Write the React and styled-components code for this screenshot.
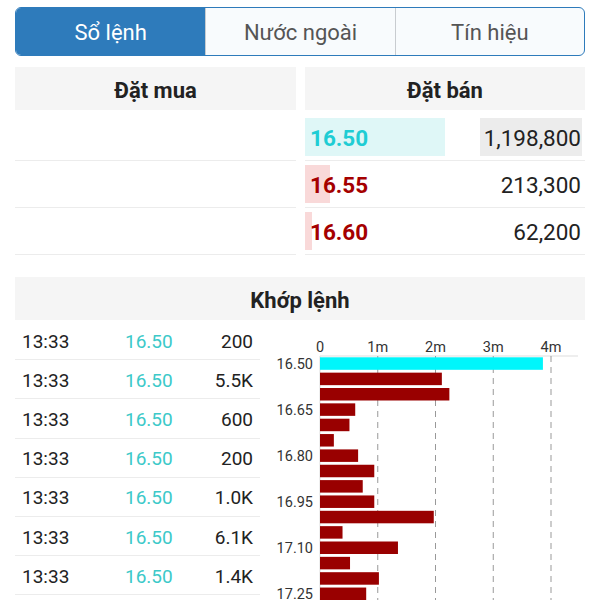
import styled, { createGlobalStyle } from "styled-components";

const asks = [
  { price: "16.50", volume: "1,198,800", bar: 140, best: true },
  { price: "16.55", volume: "213,300", bar: 25 },
  { price: "16.60", volume: "62,200", bar: 7 },
];

const trades = [
  ["13:33", "16.50", "200"],
  ["13:33", "16.50", "5.5K"],
  ["13:33", "16.50", "600"],
  ["13:33", "16.50", "200"],
  ["13:33", "16.50", "1.0K"],
  ["13:33", "16.50", "6.1K"],
  ["13:33", "16.50", "1.4K"],
];

// volume at each price step, in millions
const volumes = [
  3.86, 2.11, 2.24, 0.61, 0.51, 0.24, 0.66, 0.94, 0.74, 0.94, 1.97, 0.39,
  1.35, 0.52, 1.02, 0.8,
];
const labels = ["16.50", "16.65", "16.80", "16.95", "17.10", "17.25"];

const App = () => (
  <Page>
    <GlobalStyle />
    <Tabs>
      <Tab $active>Sổ lệnh</Tab>
      <Tab>Nước ngoài</Tab>
      <Tab>Tín hiệu</Tab>
    </Tabs>

    <Book>
      <Side>
        <Heading>Đặt mua</Heading>
        <Rows>
          {asks.map((a) => (
            <BookRow key={a.price} />
          ))}
        </Rows>
      </Side>
      <Side>
        <Heading>Đặt bán</Heading>
        <Rows>
          {asks.map((a) => (
            <BookRow key={a.price}>
              <Fill $best={a.best} style={{ width: a.bar }} />
              <Price $best={a.best}>{a.price}</Price>
              <Volume $best={a.best}>{a.volume}</Volume>
            </BookRow>
          ))}
        </Rows>
      </Side>
    </Book>

    <MatchHeading>Khớp lệnh</MatchHeading>
    <Matches>
      <TradeList>
        {trades.map(([t, p, v], i) => (
          <Trade key={i}>
            <span>{t}</span>
            <TradePrice>{p}</TradePrice>
            <TradeVol>{v}</TradeVol>
          </Trade>
        ))}
      </TradeList>
      <Chart />
    </Matches>
  </Page>
);

const Chart = () => {
  const x0 = 60;
  const y0 = 36;
  const scale = 57.75;
  const pitch = 15.35;
  return (
    <ChartSvg width="325" height="290">
      <line x1={x0} y1={y0} x2={318} y2={y0} stroke="#ddd" />
      <line x1={x0} y1={y0} x2={x0} y2={290} stroke="#ddd" />
      {[1, 2, 3, 4].map((m) => (
        <line
          key={m}
          x1={x0 + m * scale}
          x2={x0 + m * scale}
          y1={y0}
          y2={290}
          stroke="#999"
          strokeDasharray="6 5"
        />
      ))}
      {[0, 1, 2, 3, 4].map((m) => (
        <text key={m} x={x0 + m * scale} y={32} textAnchor="middle">
          {m === 0 ? "0" : `${m}m`}
        </text>
      ))}
      {volumes.map((v, i) => (
        <rect
          key={i}
          x={x0}
          y={37.3 + i * pitch}
          width={v * scale}
          height={12.5}
          fill={i === 0 ? "#00f6fb" : "#990000"}
        />
      ))}
      {labels.map((l, i) => (
        <text key={l} x={53} y={37.3 + i * 3 * pitch + 11.5} textAnchor="end">
          {l}
        </text>
      ))}
    </ChartSvg>
  );
};

export default App;

const GlobalStyle = createGlobalStyle`
  body {
    margin: 0;
    background: #fff;
    font-family: Roboto, "Noto Sans", sans-serif;
    overflow: hidden;
  }
`;

const Page = styled.div`
  width: 600px;
  height: 600px;
  padding: 7px 15px 0;
  box-sizing: border-box;
  overflow: hidden;
`;

const Tabs = styled.div`
  display: grid;
  grid-template-columns: repeat(3, 1fr);
  height: 49px;
  border: 1px solid #2e7bbb;
  border-radius: 6px;
  overflow: hidden;
  box-sizing: border-box;
  background: #f8fbfd;
`;

const Tab = styled.div`
  display: flex;
  align-items: center;
  justify-content: center;
  padding-top: 2px;
  font-size: 22px;
  color: ${(p) => (p.$active ? "#fff" : "#555")};
  background: ${(p) => (p.$active ? "#2e7bbb" : "transparent")};
  & + & {
    border-left: 1px solid #c8ccd0;
  }
`;

const Book = styled.div`
  display: grid;
  grid-template-columns: 281px 1fr;
  column-gap: 9px;
  margin-top: 11px;
`;

const Side = styled.div`
  display: flex;
  flex-direction: column;
`;

const Heading = styled.div`
  height: 43px;
  display: flex;
  align-items: center;
  justify-content: center;
  padding-top: 3px;
  box-sizing: border-box;
  background: #f5f5f5;
  font-size: 22px;
  font-weight: bold;
  color: #222;
`;

const Rows = styled.div`
  margin-top: 4px;
`;

const BookRow = styled.div`
  position: relative;
  height: 47px;
  box-sizing: border-box;
  border-bottom: 1px solid #ececec;
  display: flex;
  align-items: center;
  justify-content: space-between;
`;

const Fill = styled.div`
  position: absolute;
  left: 0;
  top: 4px;
  bottom: 4px;
  background: ${(p) => (p.$best ? "#dff7f7" : "#f9d9d9")};
`;

const Price = styled.span`
  position: relative;
  padding: 2px 0 0 5px;
  font-size: 22.5px;
  font-weight: bold;
  color: ${(p) => (p.$best ? "#1fcdd4" : "#a50000")};
`;

const Volume = styled.span`
  position: relative;
  align-self: stretch;
  margin: 4px 3px 4px 0;
  padding: 2px 1px 0 4px;
  display: flex;
  align-items: center;
  font-size: 22.5px;
  color: #222;
  background: ${(p) => (p.$best ? "#ececec" : "transparent")};
`;

const MatchHeading = styled(Heading)`
  margin-top: 22px;
`;

const Matches = styled.div`
  display: grid;
  grid-template-columns: 245px 325px;
`;

const TradeList = styled.div`
  display: flex;
  flex-direction: column;
  padding-top: 1px;
`;

const Trade = styled.div`
  height: 39.2px;
  box-sizing: border-box;
  border-bottom: 1px solid #ececec;
  display: grid;
  grid-template-columns: 103px 50px 1fr;
  align-items: center;
  padding: 2px 7px 0;
  font-size: 19px;
  color: #222;
`;

const TradePrice = styled.span`
  color: #3cc9c9;
`;

const TradeVol = styled.span`
  text-align: right;
`;

const ChartSvg = styled.svg`
  display: block;
  font-family: Roboto, sans-serif;
  font-size: 14.5px;
  text {
    fill: #333;
  }
`;
